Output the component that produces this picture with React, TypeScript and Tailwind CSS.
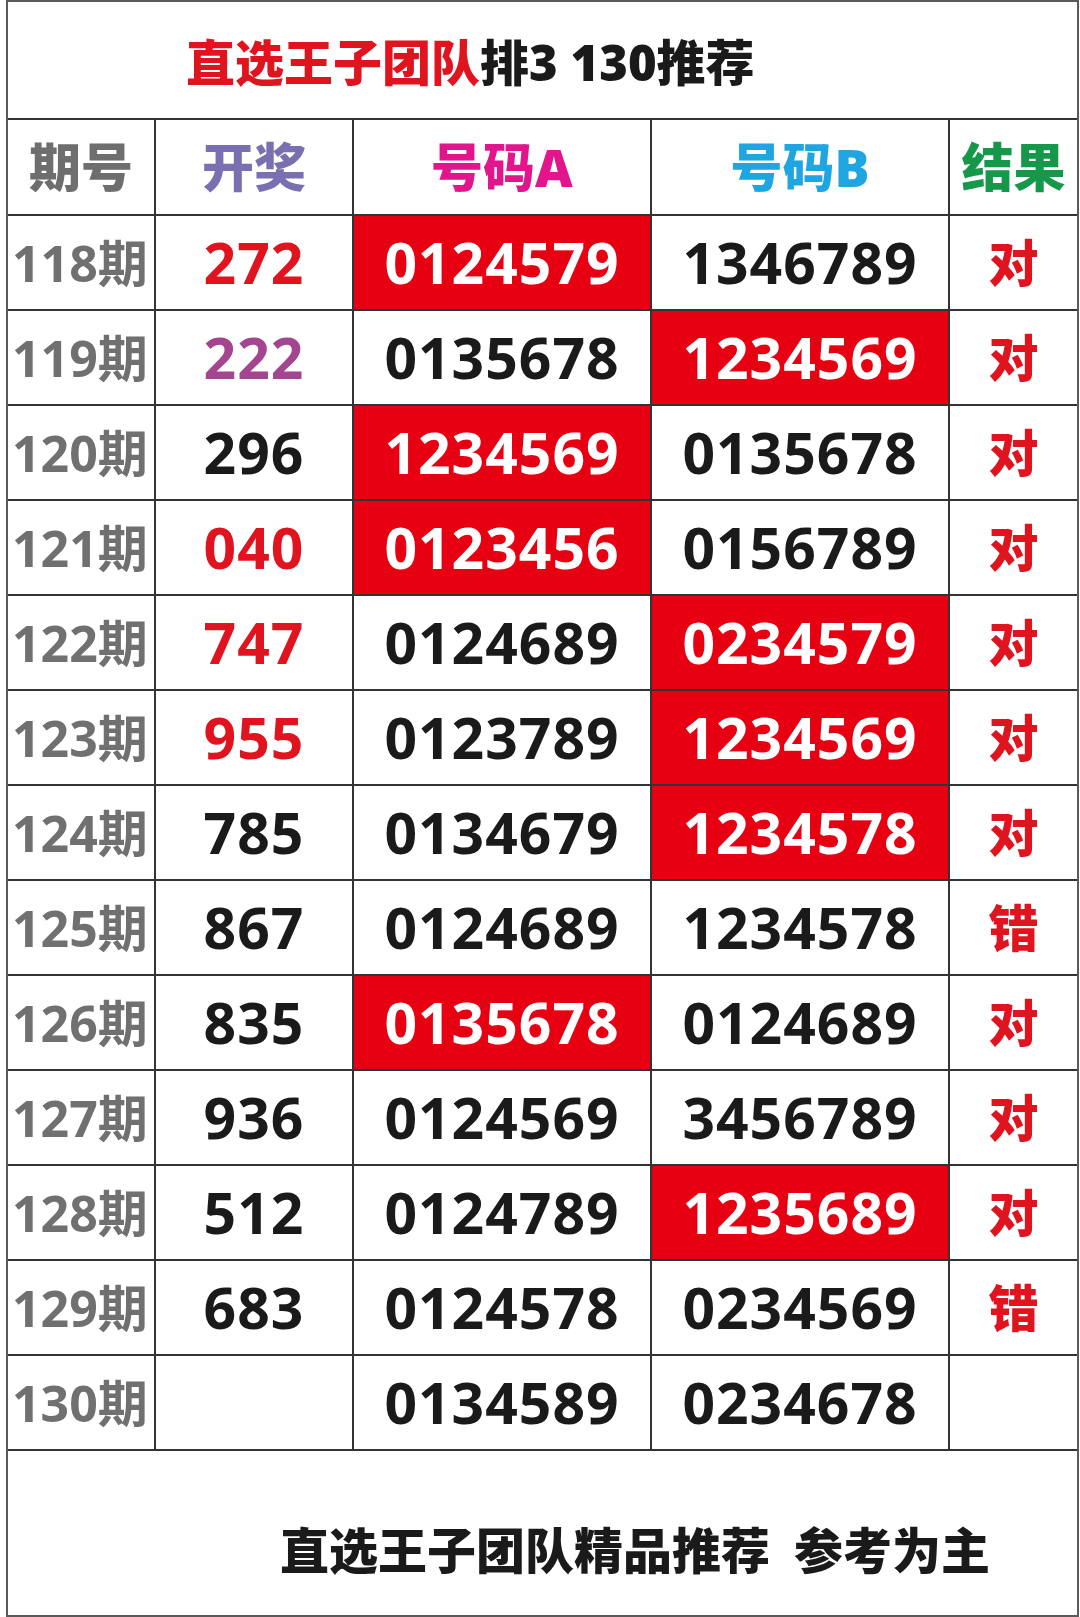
const FONT = "font-['Open_Sans','Noto_Sans_CJK_SC',sans-serif]";

type Row = {
  period: string;
  draw: string;
  drawColor: string;
  a: string;
  b: string;
  hit: 'a' | 'b' | null;
  result: string;
};

const ROWS: Row[] = [
  { period: '118', draw: '272', drawColor: 'text-[#e0141e]', a: '0124579', b: '1346789', hit: 'a', result: '对' },
  { period: '119', draw: '222', drawColor: 'text-[#a3468f]', a: '0135678', b: '1234569', hit: 'b', result: '对' },
  { period: '120', draw: '296', drawColor: 'text-[#1a1a1a]', a: '1234569', b: '0135678', hit: 'a', result: '对' },
  { period: '121', draw: '040', drawColor: 'text-[#e0141e]', a: '0123456', b: '0156789', hit: 'a', result: '对' },
  { period: '122', draw: '747', drawColor: 'text-[#e0141e]', a: '0124689', b: '0234579', hit: 'b', result: '对' },
  { period: '123', draw: '955', drawColor: 'text-[#e0141e]', a: '0123789', b: '1234569', hit: 'b', result: '对' },
  { period: '124', draw: '785', drawColor: 'text-[#1a1a1a]', a: '0134679', b: '1234578', hit: 'b', result: '对' },
  { period: '125', draw: '867', drawColor: 'text-[#1a1a1a]', a: '0124689', b: '1234578', hit: null, result: '错' },
  { period: '126', draw: '835', drawColor: 'text-[#1a1a1a]', a: '0135678', b: '0124689', hit: 'a', result: '对' },
  { period: '127', draw: '936', drawColor: 'text-[#1a1a1a]', a: '0124569', b: '3456789', hit: null, result: '对' },
  { period: '128', draw: '512', drawColor: 'text-[#1a1a1a]', a: '0124789', b: '1235689', hit: 'b', result: '对' },
  { period: '129', draw: '683', drawColor: 'text-[#1a1a1a]', a: '0124578', b: '0234569', hit: null, result: '错' },
  { period: '130', draw: '', drawColor: 'text-[#1a1a1a]', a: '0134589', b: '0234678', hit: null, result: '' },
];

function Cell({
  children,
  className = 'bg-white',
}: {
  children?: React.ReactNode;
  className?: string;
}) {
  return (
    <div className={`flex items-center justify-center ${className}`}>
      {children}
    </div>
  );
}

function NumCell({ value, hit }: { value: string; hit: boolean }) {
  return (
    <Cell className={hit ? 'bg-[#e60012] text-white' : 'bg-white text-[#1a1a1a]'}>
      <span className="text-[57px] font-bold tracking-[1px] leading-none">
        {value}
      </span>
    </Cell>
  );
}

export default function App() {
  return (
    <div className={`w-[1080px] h-[1617px] bg-white ${FONT}`}>
      <div className="ml-[6px] w-[1073px] h-[1617px] border-2 border-[#5a5a5a] flex flex-col">
        {/* Title */}
        <div className="h-[118px] flex items-center pl-[178px] pt-[4px] border-b-2 border-[#333]">
          <span className="text-[49px] font-black leading-none">
            <span className="text-[#e0141e]">直选王子团队</span>
            <span className="text-[#1a1a1a]">排3 130推荐</span>
          </span>
        </div>

        {/* Table */}
        <div className="grid grid-cols-[146px_196px_296px_296px_127px] gap-[2px] bg-[#333] border-b-2 border-[#333] grid-rows-[94px_repeat(13,93px)]">
          <Cell>
            <span className="text-[52px] font-black text-[#6e6e6e] leading-none">期号</span>
          </Cell>
          <Cell>
            <span className="text-[52px] font-black text-[#7a6fb0] leading-none">开奖</span>
          </Cell>
          <Cell>
            <span className="text-[52px] font-black text-[#e2168c] leading-none">号码A</span>
          </Cell>
          <Cell>
            <span className="text-[52px] font-black text-[#1fa6e0] leading-none">号码B</span>
          </Cell>
          <Cell>
            <span className="text-[52px] font-black text-[#16984a] leading-none">结果</span>
          </Cell>

          {ROWS.map((r) => (
            <RowCells key={r.period} row={r} />
          ))}
        </div>

        {/* Footer */}
        <div className="flex-1 flex items-end pb-[40px] pl-[272px]">
          <span className="text-[49px] font-black text-[#1a1a1a] leading-none">
            直选王子团队精品推荐
            <span className="ml-[24px]">参考为主</span>
          </span>
        </div>
      </div>
    </div>
  );
}

function RowCells({ row }: { row: Row }) {
  return (
    <>
      <Cell className="bg-white justify-start pl-[4px]">
        <span className="text-[50px] font-bold text-[#707070] leading-none">
          {row.period}期
        </span>
      </Cell>
      <Cell>
        <span className={`text-[57px] font-bold leading-none tracking-[1px] ${row.drawColor}`}>
          {row.draw}
        </span>
      </Cell>
      <NumCell value={row.a} hit={row.hit === 'a'} />
      <NumCell value={row.b} hit={row.hit === 'b'} />
      <Cell>
        <span className="text-[50px] font-black text-[#e0141e] leading-none">
          {row.result}
        </span>
      </Cell>
    </>
  );
}
